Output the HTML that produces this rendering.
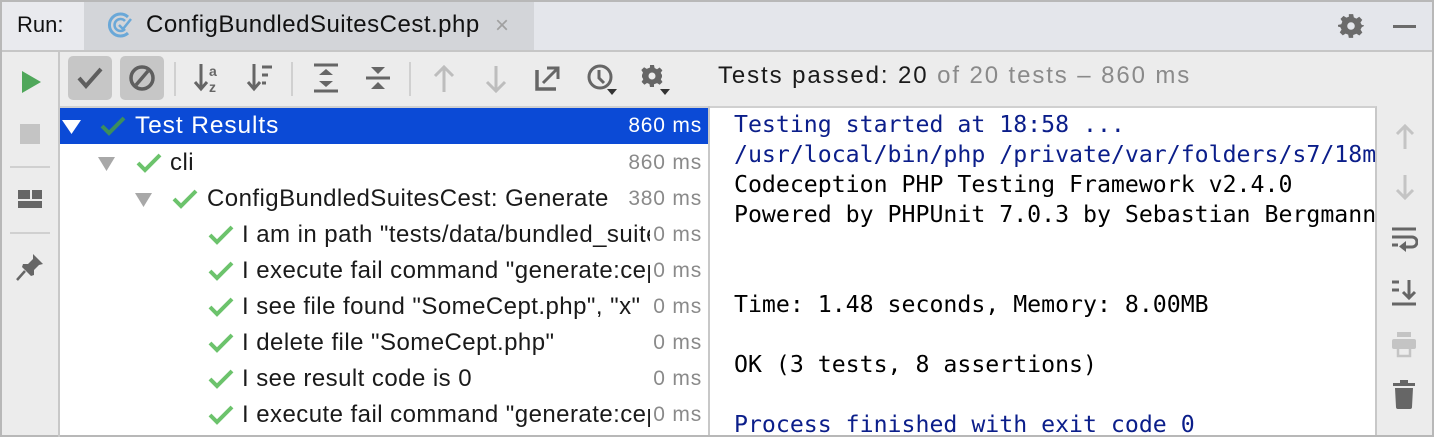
<!DOCTYPE html>
<html><head><meta charset="utf-8"><style>
*{margin:0;padding:0;box-sizing:border-box}
body{width:1434px;height:437px;overflow:hidden;background:#ececec;font-family:"Liberation Sans",sans-serif;position:relative}
.a{position:absolute}
.tab{top:0;height:52px;left:0;width:1434px;background:#e4e6eb;border:2px solid #b8b8b8;border-bottom:2px solid #c6c6c6}
.t{white-space:nowrap}
.row{position:absolute;left:60px;width:648px;height:36px;font-size:24px;letter-spacing:0.45px;line-height:36px;color:#1a1a1a}
.ms{position:absolute;right:6px;top:0;color:#8a8a8a;font-size:21px;letter-spacing:0.8px;background:#fff;padding-left:3px}
.con{font-family:"DejaVu Sans Mono",monospace;font-size:23.2px;line-height:30px;white-space:pre;color:#000}
.blue{color:#0b1e8a}
.clip{width:463px;overflow:hidden}
</style></head><body>
<div class="a tab"></div>
<div class="a" style="left:2px;top:2px;width:84px;height:48px;background:#e9eaee"></div>
<div class="a" style="left:84px;top:2px;width:450px;height:48px;background:#d3d5d9"></div>
<div class="a t" style="left:17px;top:12px;font-size:22px;color:#111">Run:</div>
<svg class="a" style="left:106px;top:11px" width="28" height="28" viewBox="0 0 28 28"><path d="M22 6A11 11 0 1 0 22 22" fill="none" stroke="#6aa8d8" stroke-width="3"/><path d="M19 10A6 6 0 1 0 19 18" fill="none" stroke="#6aa8d8" stroke-width="2.5"/><path d="M13 14l4 4 8-10" fill="none" stroke="#6aa8d8" stroke-width="2.5"/></svg>
<div class="a t" style="left:146px;top:11px;font-size:24px;letter-spacing:0.5px;color:#111">ConfigBundledSuitesCest.php</div>
<div class="a t" style="left:495px;top:12px;font-size:24px;color:#a0a0a0">×</div>
<svg class="a" style="left:1338px;top:13px" width="26" height="26" viewBox="0 0 24 24"><path fill="#6b6b6b" d="M10 1h4l.6 3 2.4 1.2 2.6-1.7 2.8 2.8-1.7 2.6L21.9 11l3 .6v0L22 13l-1.2 2.4 1.7 2.6-2.8 2.8-2.6-1.7L14 20.3 14 23h-4l-.6-3-2.4-1-2.6 1.7-2.8-2.8 1.7-2.6L2.1 13 0 12.6V11l3-.6 1-2.4-1.7-2.6 2.8-2.8 2.6 1.7L10 3.5z"/><circle cx="12" cy="12" r="3.5" fill="#e4e6eb"/></svg>
<div class="a" style="left:1393px;top:25px;width:23px;height:3px;background:#6b6b6b"></div>
<div class="a" style="left:0;top:0;width:2px;height:437px;background:#b8b8b8"></div>
<div class="a" style="right:0;top:0;width:2px;height:437px;background:#b8b8b8"></div>
<div class="a" style="left:0;bottom:0;width:1434px;height:2px;background:#b8b8b8"></div>
<div class="a" style="left:58px;top:52px;width:2px;height:385px;background:#c8c8c8"></div>
<svg class="a" style="left:21px;top:70px" width="22" height="24"><path d="M1 1L20 12L1 23Z" fill="#4fa75a"/></svg>
<div class="a" style="left:20px;top:124px;width:20px;height:20px;background:#c4c4c4"></div>
<div class="a" style="left:10px;top:166px;width:40px;height:2px;background:#d0d0d0"></div>
<div class="a" style="left:18px;top:190px;width:12px;height:9px;background:#666"></div>
<div class="a" style="left:32px;top:190px;width:10px;height:9px;background:#666"></div>
<div class="a" style="left:18px;top:201px;width:24px;height:7px;background:#666"></div>
<div class="a" style="left:10px;top:232px;width:40px;height:2px;background:#d0d0d0"></div>
<svg class="a" style="left:15px;top:252px" width="30" height="30" viewBox="0 0 30 30"><path d="M18 2l10 10-4 1-5 5 0 5-3 1-9-9 1-3 5 0 5-5z" fill="#666"/><path d="M10 19L2 28" stroke="#666" stroke-width="2.5"/></svg>
<div class="a" style="left:68px;top:56px;width:44px;height:44px;background:#c6c6c6;border-radius:5px"></div>
<svg class="a" style="left:76px;top:66px" width="28" height="24"><path d="M3 12l7 8L25 3" fill="none" stroke="#5e5e5e" stroke-width="4"/></svg>
<div class="a" style="left:120px;top:56px;width:44px;height:44px;background:#c6c6c6;border-radius:5px"></div>
<svg class="a" style="left:128px;top:64px" width="28" height="28"><circle cx="14" cy="14" r="11" fill="none" stroke="#5e5e5e" stroke-width="3.5"/><path d="M8 21L20 7" stroke="#5e5e5e" stroke-width="3.5"/></svg>
<div class="a" style="left:174px;top:62px;width:2px;height:34px;background:#d0d0d0"></div>
<svg class="a" style="left:192px;top:62px" width="32" height="32"><path d="M9 2v24M3 20l6 7 6-7" fill="none" stroke="#666" stroke-width="3"/><text x="17" y="14" font-size="14" font-weight="bold" fill="#666" font-family="Liberation Sans">a</text><text x="17" y="30" font-size="14" font-weight="bold" fill="#666" font-family="Liberation Sans">z</text></svg>
<svg class="a" style="left:245px;top:62px" width="32" height="32"><path d="M9 2v24M3 20l6 7 6-7" fill="none" stroke="#666" stroke-width="3"/><path d="M17 5h10M17 13h6M17 21h4" stroke="#666" stroke-width="3"/></svg>
<div class="a" style="left:291px;top:62px;width:2px;height:34px;background:#d0d0d0"></div>
<svg class="a" style="left:312px;top:62px" width="28" height="32"><path d="M2 3h24M2 29h24" stroke="#666" stroke-width="3"/><path d="M7 13l7-6 7 6zM7 19l7 6 7-6z" fill="#666"/></svg>
<svg class="a" style="left:364px;top:62px" width="28" height="32"><path d="M2 16h24" stroke="#666" stroke-width="3"/><path d="M7 5l7 7 7-7zM7 27l7-7 7 7z" fill="#666"/></svg>
<div class="a" style="left:409px;top:62px;width:2px;height:34px;background:#d0d0d0"></div>
<svg class="a" style="left:432px;top:64px" width="24" height="30"><path d="M12 28V4M3 12l9-9 9 9" fill="none" stroke="#bdbdbd" stroke-width="3"/></svg>
<svg class="a" style="left:484px;top:64px" width="24" height="30"><path d="M12 2v24M3 18l9 9 9-9" fill="none" stroke="#bdbdbd" stroke-width="3"/></svg>
<svg class="a" style="left:534px;top:64px" width="28" height="28"><path d="M3 6v19h19" fill="none" stroke="#666" stroke-width="3.5"/><path d="M9 19L23 5M13 4h11v11" fill="none" stroke="#666" stroke-width="3"/></svg>
<svg class="a" style="left:585px;top:62px" width="36" height="36"><circle cx="15" cy="15" r="11" fill="none" stroke="#666" stroke-width="3"/><path d="M14 8v8l5 5" fill="none" stroke="#666" stroke-width="3"/><path d="M22 27h10l-5 6z" fill="#333"/></svg>
<svg class="a" style="left:638px;top:62px" width="36" height="36" viewBox="0 0 36 36"><g transform="translate(2,2)"><path fill="#666" d="M10 1h4l.6 3 2.4 1.2 2.6-1.7 2.8 2.8-1.7 2.6L22 11v2l-1.2 2.4 1.7 2.6-2.8 2.8-2.6-1.7L14 20.3V23h-4l-.6-3-2.4-1-2.6 1.7-2.8-2.8 1.7-2.6L2 13v-2l1-2.4-1.7-2.6 2.8-2.8 2.6 1.7L10 3.5z"/><circle cx="12" cy="12" r="3.5" fill="#ececec"/></g><path d="M22 27h10l-5 6z" fill="#333"/></svg>
<div class="a t" style="left:718px;top:62px;font-size:24px;letter-spacing:1.9px;color:#1a1a1a">Tests passed: 20 <span style="color:#8a8a8a">of 20 tests – 860 ms</span></div>
<div class="a" style="left:60px;top:106px;width:650px;height:329px;background:#fff;border-top:2px solid #d0d0d0"></div>
<div class="a" style="left:708px;top:106px;width:2px;height:329px;background:#c8c8c8"></div>
<div class="row" style="top:108px;background:#0b4ad6;color:#fff;font-size:24.5px;letter-spacing:0.9px"><svg class="a" style="left:2px;top:12px" width="20" height="14"><path d="M0 0h19L9.5 14z" fill="#fff"/></svg><svg class="a" style="left:40px;top:8px" width="26" height="20"><path d="M2 10l7 7L24 2" fill="none" stroke="#3c8e5c" stroke-width="4"/></svg><span class="a t" style="left:75px">Test Results</span><span class="ms" style="color:#fff;background:none">860 ms</span></div>
<div class="row" style="top:145px"><svg class="a" style="left:38px;top:12px" width="18" height="14"><path d="M0 0h17L8.5 14z" fill="#a8a8a8"/></svg><svg class="a" style="left:76px;top:8px" width="26" height="20"><path d="M2 10l7 7L24 2" fill="none" stroke="#6cc36c" stroke-width="4"/></svg><span class="a t" style="left:110px">cli</span><span class="ms">860 ms</span></div>
<div class="row" style="top:181px;overflow:hidden"><svg class="a" style="left:75px;top:12px" width="18" height="14"><path d="M0 0h17L8.5 14z" fill="#a8a8a8"/></svg><svg class="a" style="left:112px;top:8px" width="26" height="20"><path d="M2 10l7 7L24 2" fill="none" stroke="#6cc36c" stroke-width="4"/></svg><span class="a t" style="left:147px;width:420px;overflow:hidden">ConfigBundledSuitesCest: Generate</span><span class="ms">380 ms</span></div>
<div class="row" style="top:217px"><svg class="a" style="left:148px;top:8px" width="26" height="20"><path d="M2 10l7 7L24 2" fill="none" stroke="#6cc36c" stroke-width="4"/></svg><span class="a t clip" style="left:182px">I am in path "tests/data/bundled_suites"</span><span class="ms">0 ms</span></div>
<div class="row" style="top:253px"><svg class="a" style="left:148px;top:8px" width="26" height="20"><path d="M2 10l7 7L24 2" fill="none" stroke="#6cc36c" stroke-width="4"/></svg><span class="a t clip" style="left:182px">I execute fail command "generate:cept"</span><span class="ms">0 ms</span></div>
<div class="row" style="top:289px"><svg class="a" style="left:148px;top:8px" width="26" height="20"><path d="M2 10l7 7L24 2" fill="none" stroke="#6cc36c" stroke-width="4"/></svg><span class="a t clip" style="left:182px">I see file found "SomeCept.php", "x"</span><span class="ms">0 ms</span></div>
<div class="row" style="top:325px"><svg class="a" style="left:148px;top:8px" width="26" height="20"><path d="M2 10l7 7L24 2" fill="none" stroke="#6cc36c" stroke-width="4"/></svg><span class="a t" style="left:182px">I delete file "SomeCept.php"</span><span class="ms">0 ms</span></div>
<div class="row" style="top:361px"><svg class="a" style="left:148px;top:8px" width="26" height="20"><path d="M2 10l7 7L24 2" fill="none" stroke="#6cc36c" stroke-width="4"/></svg><span class="a t" style="left:182px">I see result code is 0</span><span class="ms">0 ms</span></div>
<div class="row" style="top:397px"><svg class="a" style="left:148px;top:8px" width="26" height="20"><path d="M2 10l7 7L24 2" fill="none" stroke="#6cc36c" stroke-width="4"/></svg><span class="a t clip" style="left:182px">I execute fail command "generate:cept"</span><span class="ms">0 ms</span></div>
<div class="a" style="left:710px;top:106px;width:667px;height:329px;background:#fff;border-top:2px solid #d0d0d0;border-right:2px solid #c8c8c8;overflow:hidden">
<div class="con" style="position:absolute;left:24px;top:2px"><span class="blue">Testing started at 18:58 ...
/usr/local/bin/php /private/var/folders/s7/18mxyz</span>
Codeception PHP Testing Framework v2.4.0
Powered by PHPUnit 7.0.3 by Sebastian Bergmann


Time: 1.48 seconds, Memory: 8.00MB

OK (3 tests, 8 assertions)

<span class="blue">Process finished with exit code 0</span></div></div>
<svg class="a" style="left:1394px;top:122px" width="22" height="28"><path d="M11 27V4M3 12l8-8 8 8" fill="none" stroke="#c4c4c4" stroke-width="3"/></svg>
<svg class="a" style="left:1394px;top:174px" width="22" height="28"><path d="M11 1v23M3 16l8 8 8-8" fill="none" stroke="#c4c4c4" stroke-width="3"/></svg>
<svg class="a" style="left:1390px;top:226px" width="28" height="30"><path d="M2 3h24M2 11h20a5 5 0 0 1 0 10H14" fill="none" stroke="#666" stroke-width="3"/><path d="M2 19h6" stroke="#666" stroke-width="3"/><path d="M16 15v11l-7-5.5z" fill="#666"/></svg>
<svg class="a" style="left:1390px;top:278px" width="28" height="28"><path d="M2 4h7M2 12h7M2 26h24M19 2v18M13 14l6 6 6-6" fill="none" stroke="#666" stroke-width="3"/></svg>
<svg class="a" style="left:1390px;top:330px" width="28" height="28"><rect x="7" y="2" width="14" height="5" fill="#c4c4c4"/><rect x="2" y="9" width="24" height="10" rx="2" fill="#c4c4c4"/><rect x="8" y="17" width="12" height="9" fill="none" stroke="#c4c4c4" stroke-width="2.5"/></svg>
<svg class="a" style="left:1392px;top:380px" width="24" height="30"><rect x="1" y="3" width="22" height="3" fill="#666"/><rect x="8" y="0" width="8" height="4" fill="#666"/><path d="M3 8h18l-1 19a2 2 0 0 1-2 2H6a2 2 0 0 1-2-2z" fill="#666"/></svg>
</body></html>
